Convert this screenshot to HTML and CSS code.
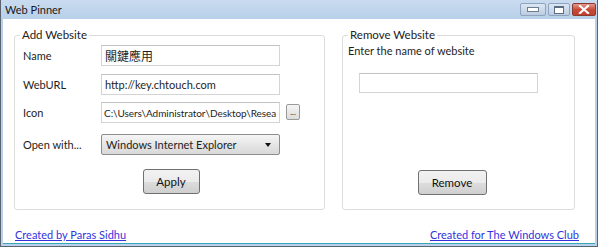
FILE: index.html
```html
<!DOCTYPE html>
<html>
<head>
<meta charset="utf-8">
<link rel="stylesheet" href="styles.css">
</head>
<body>
<div class="window">
  <div class="titlebar">
    <span class="title">Web Pinner</span>
    <div class="controls">
      <span class="ctl min"><span class="bar"></span></span>
      <span class="ctl max"><span class="box"></span></span>
      <span class="ctl close">
        <svg width="12" height="9" viewBox="0 0 12 9"><path d="M2 1 L10 8 M10 1 L2 8" stroke="#fff" stroke-width="2.2" stroke-linecap="square"/></svg>
      </span>
    </div>
  </div>
  <div class="client">
    <div class="groups">
      <fieldset class="group add">
        <legend>Add Website</legend>
        <div class="row r-name">
          <label>Name</label>
          <div class="field">關鍵應用</div>
        </div>
        <div class="row r-url">
          <label>WebURL</label>
          <div class="field">http://key.chtouch.com</div>
        </div>
        <div class="row r-icon">
          <label>Icon</label>
          <div class="field clip">C:\Users\Administrator\Desktop\Resea</div>
          <span class="dots">...</span>
        </div>
        <div class="row r-open">
          <label>Open with...</label>
          <div class="select"><span>Windows Internet Explorer</span><span class="arrow"></span></div>
        </div>
        <div class="btnrow"><span class="btn apply">Apply</span></div>
      </fieldset>
      <fieldset class="group remove">
        <legend>Remove Website</legend>
        <div class="hint">Enter the name of website</div>
        <div class="field empty"></div>
        <div class="btnrow r-remove"><span class="btn removebtn">Remove</span></div>
      </fieldset>
    </div>
    <div class="links">
      <a href="#">Created by Paras Sidhu</a>
      <a href="#">Created for The Windows Club</a>
    </div>
  </div>
</div>
</body>
</html>
```
FILE: styles.css
```css
html, body { margin: 0; padding: 0; background: #fff; }
body { width: 600px; height: 250px; overflow: hidden; font-family: "Lato", "Noto Sans", sans-serif; font-size: 11px; color: #1e1e1e; }
.window { width: 596px; height: 246px; border: 1px solid #5a6470; border-top: none; box-sizing: content-box; background: linear-gradient(#c9dbef, #b8d0ea 19px); display: flex; flex-direction: column; }
.titlebar { height: 19px; display: flex; align-items: center; justify-content: space-between; padding-left: 4px; }
.title { font-size: 11px; color: #1a1a1a; }
.controls { display: flex; gap: 2px; margin-right: 1px; align-self: flex-start; margin-top: 3px; }
.ctl { display: flex; align-items: center; justify-content: center; width: 26px; height: 13px; border: 1px solid #8ea3bf; border-radius: 2px; background: linear-gradient(#dde7f3, #bccce0); box-sizing: border-box; }
.ctl.max { width: 22px; }
.ctl.close { width: 24px; border-color: #8a3a30; background: linear-gradient(#e49a8c, #c84a38 50%, #c2402f); }
.bar { width: 10px; height: 3px; background: #fff; border: 1px solid #6b7d93; }
.box { width: 8px; height: 5px; border: 1px solid #5b6c82; border-top-width: 2px; background: #fff; }
.client { flex: 1; margin: 0 2px 2px 2px; background: #fff; display: flex; flex-direction: column; border-bottom: 1px solid #3aa7b8; }
.groups { display: flex; padding: 9px 0 0 11px; gap: 17px; }
.group { margin: 0; border: 1px solid #dcdcdc; border-radius: 3px; padding: 0; height: 182px; box-sizing: border-box; position: relative; }
.group legend { padding: 0 2px; margin-left: 5px; font-size: 11.5px; color: #222; line-height: 14px; }
.add { width: 311px; }
.remove { width: 233px; }
.row { display: flex; align-items: center; height: 22px; margin-left: 8px; }
.row label { width: 78px; font-size: 11px; }
.r-name { margin-top: 2px; }
.r-url { margin-top: 7px; }
.r-icon { margin-top: 6px; }
.r-open { margin-top: 11px; height: 21px; }
.field { width: 179px; height: 21px; box-sizing: border-box; border: 1px solid #d4d4d4; border-top-color: #c2c2c2; background: #fff; padding: 2px 3px 0; font-size: 11px; line-height: 16px; white-space: nowrap; overflow: hidden; }
.field.clip { font-size: 10px; letter-spacing: -0.05px; padding: 2px 1px 0 2px; }
.r-name .field { font-family: "Noto Sans CJK TC", sans-serif; font-size: 12px; line-height: 16px; }
.dots { width: 14px; height: 16px; margin-left: 6px; border: 1px solid #9a9a9a; border-radius: 2px; background: linear-gradient(#f4f4f4, #dcdcdc); font-size: 8px; line-height: 14px; text-align: center; box-sizing: border-box; }
.select { width: 179px; height: 21px; box-sizing: border-box; border: 1px solid #8d8d8d; border-radius: 2px; background: linear-gradient(#f5f5f5, #e6e6e6 50%, #d8d8d8); display: flex; align-items: center; justify-content: space-between; padding: 0 8px 0 4px; font-size: 11px; }
.arrow { width: 0; height: 0; border-left: 3px solid transparent; border-right: 3px solid transparent; border-top: 4px solid #111; }
.btnrow { display: flex; justify-content: center; margin-top: 14px; }
.btn { height: 25px; box-sizing: border-box; border: 1px solid #707070; border-radius: 3px; background: linear-gradient(#f2f2f2, #ebebeb 50%, #dddddd 51%, #cfcfcf); display: flex; align-items: center; justify-content: center; font-size: 11.5px; color: #111; }
.apply { width: 57px; margin-left: 3px; }
.hint { margin: 2px 0 0 5px; font-size: 11px; }
.field.empty { margin: 16px 0 0 16px; height: 20px; }
.r-remove { margin-top: 77px; }
.removebtn { width: 69px; margin-left: -13px; }
.links { display: flex; justify-content: space-between; padding: 18px 16px 0 12px; }
.links a { color: #3333dd; font-size: 11px; text-decoration: underline; }
```
